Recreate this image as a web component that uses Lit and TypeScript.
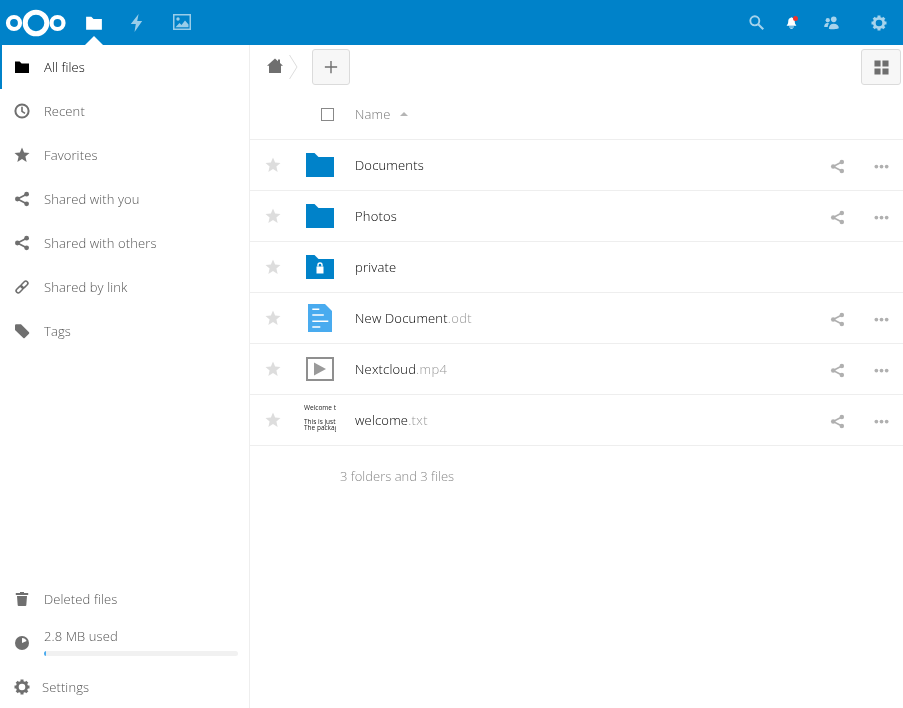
import { LitElement, html, css, svg } from "lit";
import { customElement } from "lit/decorators.js";

const ic = (body: unknown, size = 16, vb = 16) =>
  html`<svg width=${size} height=${size} viewBox="0 0 ${vb} ${vb}" fill="currentColor" aria-hidden="true">${body}</svg>`;

const folderPath = svg`<path d="M1 2.5h4.6L7.6 4.5H15v9.5H1z"/>`;
const star = svg`<path d="M8 .6l2.1 5 5.4.45-4.1 3.55 1.25 5.3L8 12.1l-4.65 2.8 1.25-5.3L.5 6.05l5.4-.45z"/>`;
const share = svg`<circle cx="12.6" cy="3.2" r="2.4"/><circle cx="12.6" cy="12.8" r="2.4"/><circle cx="3.4" cy="8" r="2.4"/><path d="M3.4 8l9.2-4.8M3.4 8l9.2 4.8" stroke="currentColor" stroke-width="1.7" fill="none"/>`;
const clock = svg`<circle cx="8" cy="8" r="6.6" fill="none" stroke="currentColor" stroke-width="2"/><path d="M8 3.8V8.3l3 2" fill="none" stroke="currentColor" stroke-width="1.6"/>`;
const link = svg`<g fill="none" stroke="currentColor" stroke-width="1.6" transform="rotate(-45 8 8)"><rect x="0.6" y="5.9" width="8" height="4.2" rx="2.1"/><rect x="7.4" y="5.9" width="8" height="4.2" rx="2.1"/></g>`;
const tag = svg`<path d="M1 2.5A1.2 1.2 0 0 1 2.2 1.3H7l8 8a1 1 0 0 1 0 1.4l-4.3 4.3a1 1 0 0 1-1.4 0l-8.3-8z"/>`;
const trash = svg`<path d="M6 1h4v1h4.2v2H1.8V2H6zM3 5h10l-.7 9.2a.9.9 0 0 1-.9.8H4.6a.9.9 0 0 1-.9-.8z"/>`;
const pie = svg`<circle cx="8" cy="8" r="7"/><path d="M8 3a5 5 0 0 1 4.6 3L8 8z" fill="#fff"/>`;

const gearTeeth = Array.from({ length: 8 }, (_, i) => i * 45);
const gear = svg`<circle cx="8" cy="8" r="4.7" fill="none" stroke="currentColor" stroke-width="2.8"/>${gearTeeth.map(
  (a) => svg`<rect x="6.5" y="0.5" width="3" height="3" transform="rotate(${a} 8 8)"/>`
)}`;
const search = svg`<circle cx="6.2" cy="6.2" r="4.8" fill="none" stroke="currentColor" stroke-width="2"/><path d="M9.8 9.8l5.4 5.4" stroke="currentColor" stroke-width="2.2" fill="none"/>`;
const bell = svg`<path d="M7 2.2a1.1 1.1 0 0 1 2 0C11 2.8 12 4.4 12 6.5c0 2.4.7 3.9 1.8 4.9v.6H2.2v-.6C3.3 10.4 4 8.9 4 6.5 4 4.4 5 2.8 7 2.2z"/><rect x="5" y="13" width="6" height="1"/><rect x="6.5" y="14.6" width="3" height="1"/>`;
const people = svg`<circle cx="10.4" cy="4.6" r="3"/><path d="M5.2 14.6c0-3.5 2-5.4 5.2-5.4s5.4 1.9 5.4 4.6c0 1.2-10.6 1.8-10.6.8z"/><circle cx="4" cy="5.6" r="2.3"/><path d="M.2 12.5c0-2.4 1.3-4 3.6-4 .8 0 1.3.2 1.7.5-1 1-1.5 2.3-1.5 3.8-1.8.2-3.8.2-3.8-.3z"/>`;
const bolt = svg`<path d="M9.6 0 1.8 10h5l-1.3 8 7.7-11H8.2z"/>`;
const image = svg`<path fill-rule="evenodd" d="M0 0h18v16H0zM1.5 1.5v13h15v-13z"/><circle cx="5" cy="5" r="1.7"/><path d="M2.5 13.2l4-4.2 2 2 3.5-4.6 3.5 4v2.8z"/>`;
const home = svg`<path d="M8 .5l3 2.7V1.5h2v3.5l3 2.800h-2V15H2V7.800H0z"/>`;
const plus = svg`<path d="M7.2 1h1.600v6.200H15v1.600H8.800V15H7.200V8.800H1V7.200h6.200z"/>`;
const grid = svg`<path d="M.5.5h6.500v6.500H.5zM9 .5h6.500v6.500H9zM.5 9H7v6.500H.5zM9 9h6.500v6.500H9z"/>`;
const dots = svg`<circle cx="2.5" cy="8" r="2"/><circle cx="8" cy="8" r="2"/><circle cx="13.5" cy="8" r="2"/>`;

type Row = { name: string; ext?: string; icon: unknown; noShare?: boolean };

const folderIcon = html`<svg class="fi" width="28" height="24" viewBox="0 0 28 24" aria-hidden="true"><path d="M0 0h8.500l4 4H28v20H0z" fill="#0082c9"/></svg>`;
const lockIcon = html`<svg class="fi" width="28" height="24" viewBox="0 0 28 24" aria-hidden="true"><path d="M0 0h8.500l4 4H28v20H0z" fill="#0082c9"/><path d="M10.500 11.500h7v7h-7z" fill="#fff"/><path d="M12 11.500V10a2 2 0 0 1 4 0v1.500" fill="none" stroke="#fff" stroke-width="1.400"/></svg>`;
const docIcon = html`<svg class="fi" width="24" height="28" viewBox="0 0 24 28" aria-hidden="true"><path d="M0 0h17l7 7v21H0z" fill="#49abef"/><path d="M4.300 4.500h7v1.500h-7zM4.300 10.200h11.500v1.500H4.300zM4.300 16.500h16v1.500h-16zM4.300 22.200h8v1.500h-8z" fill="#fff"/></svg>`;
const videoIcon = html`<svg class="fi" width="28" height="24" viewBox="0 0 28 24" aria-hidden="true"><rect x="1" y="1" width="26" height="22" fill="none" stroke="#8f8f8f" stroke-width="2"/><path d="M8 5.500l12 6.500-12 6.500z" fill="#9a9a9a"/></svg>`;
const textThumb = html`<div class="thumb"><div>Welcome to</div><div class="gap">This is just</div><div>The package</div></div>`;

const rows: Row[] = [
  { name: "Documents", icon: folderIcon },
  { name: "Photos", icon: folderIcon },
  { name: "private", icon: lockIcon, noShare: true },
  { name: "New Document", ext: ".odt", icon: docIcon },
  { name: "Nextcloud", ext: ".mp4", icon: videoIcon },
  { name: "welcome", ext: ".txt", icon: textThumb },
];

const nav: [string, unknown][] = [
  ["Recent", clock],
  ["Favorites", star],
  ["Shared with you", share],
  ["Shared with others", share],
  ["Shared by link", link],
  ["Tags", tag],
];

@customElement("app-root")
export class AppRoot extends LitElement {
  static styles = css`
    :host { display: flex; flex-direction: column; height: 100vh; overflow: hidden; font-family: "Open Sans", sans-serif; font-weight: 300; font-size: 13px; color: #222; will-change: transform; }
    svg { display: block; flex: none; }
    header { height: 45px; flex: none; background: #0082c9; display: flex; align-items: center; color: #fff; position: relative; }
    .logo { margin-left: 5px; }
    .apps { display: flex; align-items: center; margin-left: 18px; gap: 26px; }
    .dim { opacity: .6; }
    .tip { position: absolute; left: 85px; bottom: 0; width: 0; height: 0; border-left: 9px solid transparent; border-right: 9px solid transparent; border-bottom: 9px solid #fff; }
    .right { margin-left: auto; display: flex; align-items: center; padding-right: 16px; }
    .right .dim { opacity: .65; }
    .r-bell { margin-left: 21px; position: relative; }
    .r-people { margin-left: 26px; }
    .r-gear { margin-left: 32px; }
    .dot { position: absolute; right: 0; top: 0; width: 5px; height: 5px; border-radius: 50%; background: #e9322d; }
    .body { flex: 1; display: flex; min-height: 0; }
    aside { width: 249px; flex: none; border-right: 1px solid #eee; display: flex; flex-direction: column; }
    .nav { height: 44px; flex: none; display: flex; align-items: center; color: #555; padding-left: 14px; gap: 14px; letter-spacing: .11px; }
    .nav.active { color: #000; box-shadow: inset 2px 0 0 #0082c9; }
    .spacer { flex: 1; }
    .quota { display: flex; align-items: flex-start; padding: 6px 11px 0 14px; gap: 14px; height: 37px; box-sizing: border-box; flex: none; }
    .quota svg { color: #6f6f6f; margin-top: 8px; }
    .qbody { flex: 1; color: #555; letter-spacing: .11px; }
    .qlabel { line-height: 18px; }
    .bar { height: 5px; margin-top: 6px; border-radius: 3px; background: #f1f1f1; overflow: hidden; }
    .bar i { display: block; width: 2px; height: 100%; background: #49abef; }
    .nav.settings { gap: 12px; margin-top: 7px; margin-bottom: -1px; }
    .nav svg { color: #6f6f6f; }
    .nav.active svg { color: #000; }
    main { flex: 1; min-width: 0; display: flex; flex-direction: column; }
    .controls { height: 44px; flex: none; display: flex; align-items: center; padding-left: 17px; padding-right: 2px; color: #6f6f6f; }
    .homeicon { margin-top: -2px; }
    .crumb { margin-left: 6px; margin-right: 14px; }
    .btn { height: 36px; box-sizing: border-box; width: 38px; background: #f7f7f7; border: 1px solid #dbdbdb; border-radius: 3px; display: flex; align-items: center; justify-content: center; color: #6f6f6f; }
    .btn.view { width: 40px; margin-left: auto; }
    .row { display: grid; grid-template-columns: 46px 59px 1fr 44px 44px; align-items: center; height: 50px; border-bottom: 1px solid #eee; flex: none; }
    .thead { height: 50px; color: #777; letter-spacing: .15px; }
    .check { width: 13px; height: 13px; box-sizing: border-box; border: 1px solid #888; margin-left: 25px; background: #fff; }
    .sort { display: flex; align-items: center; gap: 9px; }
    .caret { width: 0; height: 0; border-left: 4px solid transparent; border-right: 4px solid transparent; border-bottom: 4px solid #b5b5b5; }
    .star { color: #ddd; display: flex; justify-content: center; }
    .icon { display: flex; justify-content: center; width: 48px; }
    .name { color: #000; white-space: nowrap; letter-spacing: .18px; }
    .ext { color: #999; letter-spacing: .35px; }
    .act { display: flex; justify-content: center; color: #b0b0b0; padding-top: 2px; }
    .thumb { width: 32px; height: 32px; box-sizing: border-box; padding-top: 1px; overflow: hidden; font-size: 6.5px; font-weight: 400; line-height: 6px; white-space: nowrap; color: #222; }
    .thumb .gap { margin-top: 8px; }
    .summary { padding-left: 90px; padding-top: 21px; color: #888; line-height: 18px; }
  `;

  render() {
    return html`
      <header>
        <svg class="logo" width="62" height="28" viewBox="0 0 62 28" fill="none" stroke="#fff" aria-hidden="true">
          <circle cx="9" cy="14" r="6" stroke-width="4.2"/>
          <circle cx="31" cy="14" r="10.8" stroke-width="5"/>
          <circle cx="52.5" cy="14" r="6" stroke-width="4.2"/>
        </svg>
        <nav class="apps">
          ${ic(folderPath, 18)}
          <span class="dim">${ic(bolt, 18, 18)}</span>
          <span class="dim">${ic(image, 18, 18)}</span>
        </nav>
        <div class="tip"></div>
        <div class="right">
          <span class="dim">${ic(search, 15)}</span>
          <span class="r-bell">${ic(bell, 13)}<span class="dot"></span></span>
          <span class="dim r-people">${ic(people, 15)}</span>
          <span class="dim r-gear">${ic(gear, 16)}</span>
        </div>
      </header>
      <div class="body">
        <aside>
          <div class="nav active">${ic(folderPath)}All files</div>
          ${nav.map(([t, i]) => html`<div class="nav">${ic(i)}${t}</div>`)}
          <div class="spacer"></div>
          <div class="nav">${ic(trash)}Deleted files</div>
          <div class="quota">
            ${ic(pie)}
            <div class="qbody"><div class="qlabel">2.8 MB used</div><div class="bar"><i></i></div></div>
          </div>
          <div class="nav settings">${ic(gear)}Settings</div>
        </aside>
        <main>
          <div class="controls">
            <span class="homeicon">${ic(home)}</span>
            <svg class="crumb" width="9" height="24" viewBox="0 0 9 24" fill="none" stroke="#ddd" aria-hidden="true"><path d="M.5 0l7.5 12L.5 24"/></svg>
            <div class="btn">${ic(plus, 14)}</div>
            <div class="btn view">${ic(grid, 15)}</div>
          </div>
          <div class="row thead">
            <span></span>
            <span class="check"></span>
            <span class="sort">Name <span class="caret"></span></span>
          </div>
          ${rows.map(
            (r) => html`<div class="row">
              <span class="star">${ic(star)}</span>
              <span class="icon">${r.icon}</span>
              <span class="name">${r.name}<span class="ext">${r.ext ?? ""}</span></span>
              <span class="act">${r.noShare ? "" : ic(share, 15)}</span>
              <span class="act">${r.noShare ? "" : ic(dots, 15)}</span>
            </div>`
          )}
          <div class="summary">3 folders and 3 files</div>
        </main>
      </div>
    `;
  }
}
